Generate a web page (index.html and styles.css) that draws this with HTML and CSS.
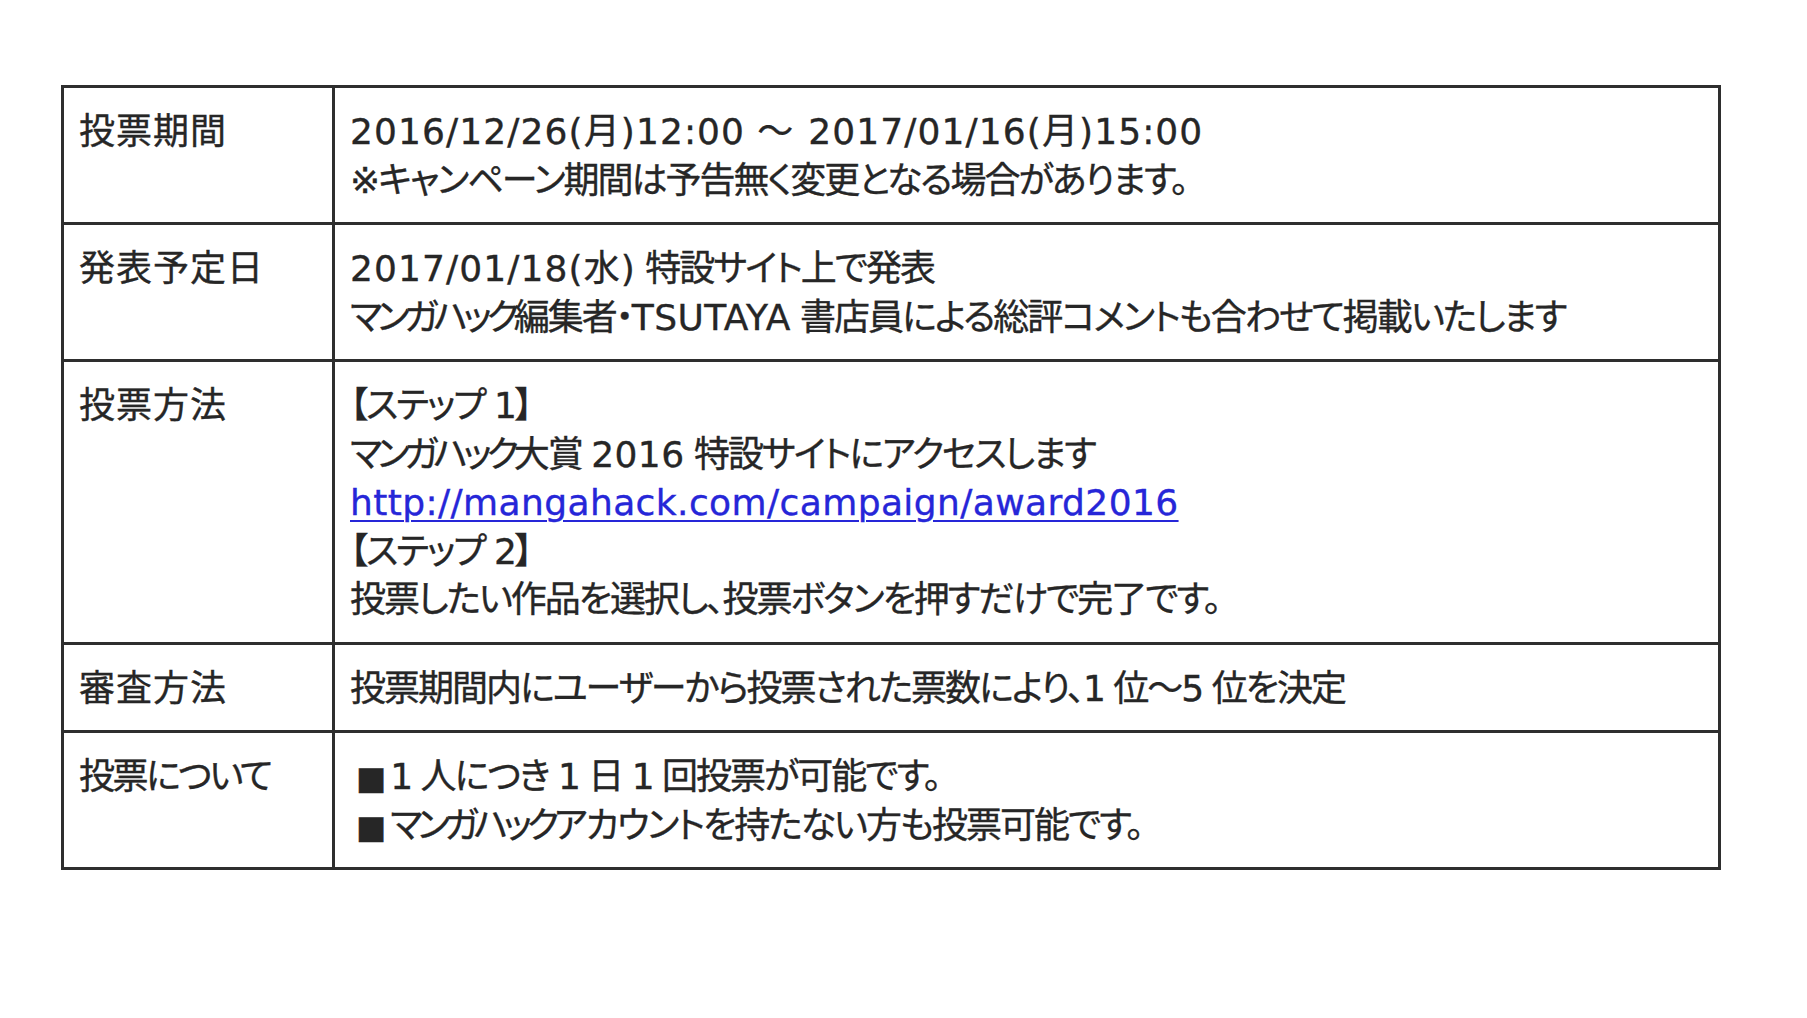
FILE: index.html
```html
<!DOCTYPE html>
<html lang="ja">
<head>
<meta charset="utf-8">
<title>投票概要</title>
<link rel="stylesheet" href="styles.css">
</head>
<body>
<div class="table">
  <div class="cell label"><div class="line">投票期間</div></div>
  <div class="cell content">
    <div class="line lat wide">2016/12/26(月)12:00<span class="tilde">～</span>2017/01/16(月)15:00</div>
    <div class="line">※キャンペーン期間は予告無く変更となる場合があります。</div>
  </div>

  <div class="cell label"><div class="line">発表予定日</div></div>
  <div class="cell content">
    <div class="line"><span class="lat wide">2017/01/18(水)</span> 特設サイト上で発表</div>
    <div class="line"><span class="brand">マンガハック</span>編集者・<span class="lat">TSUTAYA</span> 書店員による総評コメントも合わせて掲載いたします</div>
  </div>

  <div class="cell label"><div class="line">投票方法</div></div>
  <div class="cell content">
    <div class="line">【ステップ 1】</div>
    <div class="line"><span class="brand">マンガハック</span>大賞 <span class="lat">2016</span> 特設サイトにアクセスします</div>
    <div class="line"><a class="link lat" href="#">http://mangahack.com/campaign/award2016</a></div>
    <div class="line">【ステップ 2】</div>
    <div class="line">投票したい作品を選択し、投票ボタンを押すだけで完了です。</div>
  </div>

  <div class="cell label"><div class="line">審査方法</div></div>
  <div class="cell content">
    <div class="line">投票期間内にユーザーから投票された票数により、1 位～5 位を決定</div>
  </div>

  <div class="cell label"><div class="line kana">投票について</div></div>
  <div class="cell content">
    <div class="line"><span class="sq">■</span>1 人につき 1 日 1 回投票が可能です。</div>
    <div class="line"><span class="sq">■</span><span class="brand">マンガハック</span>アカウントを持たない方も投票可能です。</div>
  </div>
</div>
</body>
</html>
```

FILE: styles.css
```css
html, body {
  margin: 0;
  padding: 0;
  background: #ffffff;
}

body {
  font-family: "DejaVu Sans", "Noto Sans CJK JP", sans-serif;
  font-size: 36px;
  color: #262626;
  font-feature-settings: "palt" 1;
  -webkit-text-stroke: 0.35px #262626;
}

.table {
  display: grid;
  grid-template-columns: 271px 1386px;
  width: 1660px;
  margin: 85px 0 0 61px;
  border-top: 3px solid #2e2e2e;
  border-left: 3px solid #2e2e2e;
  box-sizing: border-box;
}

.cell {
  box-sizing: border-box;
  border-right: 3px solid #2e2e2e;
  border-bottom: 3px solid #2e2e2e;
  padding: 20px 10px 17px 15px;
}

.line {
  height: 48.5px;
  line-height: 48.5px;
  white-space: nowrap;
}

.label .line {
  letter-spacing: 1px;
}

.label .line.kana {
  letter-spacing: -2.5px;
}

.content .line {
  letter-spacing: -2px;
}

.content .lat,
.content .line.lat {
  letter-spacing: 0.4px;
}

.content .lat.wide,
.content .line.lat.wide {
  letter-spacing: 1.1px;
}

.content .brand {
  letter-spacing: -5px;
}

.tilde {
  margin: 0 14px 0 12px;
}

.link {
  color: #2626d8;
  -webkit-text-stroke: 0.35px #2626d8;
  text-decoration: underline;
  text-decoration-thickness: 2px;
  text-underline-offset: 5px;
}

.sq {
  font-size: 32px;
  margin: 0 4px 0 6px;
  letter-spacing: 0;
}
```
